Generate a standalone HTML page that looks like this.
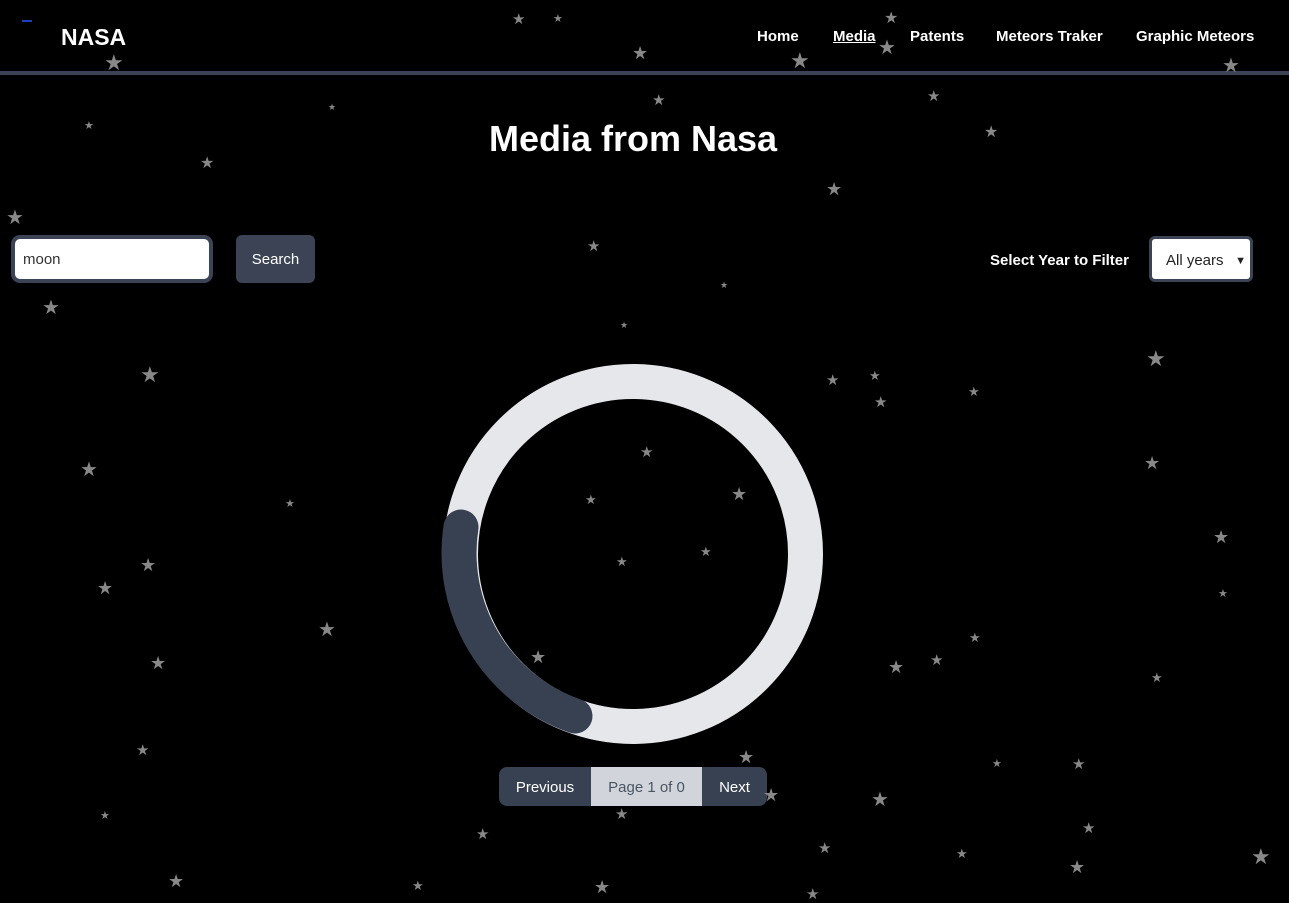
<!DOCTYPE html>
<html><head><meta charset="utf-8"><style>
body{margin:0;width:1289px;height:900px;background:#000;overflow:hidden;font-family:"Liberation Sans",sans-serif;position:relative;color:#fff}
.s{position:absolute;color:#888;line-height:1}
.hdr{position:absolute;left:0;top:0;width:1289px;height:71px;border-bottom:4px solid #3b4354}
.logo{position:absolute;left:61px;top:24px;font-size:23px;font-weight:bold}
.nav{position:absolute;top:28px;font-size:15px;font-weight:bold}
h1{position:absolute;left:0;width:1266px;text-align:center;top:118px;margin:0;font-size:36px;font-weight:bold}
.inp{position:absolute;left:11px;top:235px;height:40px;border:4px solid #3b4354;border-radius:9px;background:#fff;color:#333;font-size:15px;line-height:42px;padding-left:8px;width:186px}
.btn{position:absolute;left:236px;top:235px;width:79px;height:48px;background:#3b4354;border-radius:6px;font-size:15px;text-align:center;line-height:50px}
.lbl{position:absolute;left:990px;top:252px;font-size:15px;font-weight:bold}
.sel{position:absolute;left:1149px;top:236px;height:40px;border:3px solid #3b4354;border-radius:6px;background:#fff;color:#222;font-size:15px;line-height:44px;padding-left:14px;width:84px}
.pg{position:absolute;top:767px;height:39px;font-size:15px;line-height:41px;text-align:center}
</style></head><body>
<div class="hdr"></div>
<div style="position:absolute;left:22px;top:20px;width:10px;height:2px;background:#1a3fbf"></div>
<div class="logo">NASA</div>
<div class="nav" style="left:757px">Home</div>
<div class="nav" style="left:833px;text-decoration:underline">Media</div>
<div class="nav" style="left:910px">Patents</div>
<div class="nav" style="left:996px">Meteors Traker</div>
<div class="nav" style="left:1136px">Graphic Meteors</div>
<h1>Media from Nasa</h1>
<div class="inp">moon</div>
<div class="btn">Search</div>
<div class="lbl">Select Year to Filter</div>
<div class="sel">All years <span style="position:absolute;right:4px;font-size:11px">&#9660;</span></div>
<svg style="position:absolute;left:0;top:0" width="1289" height="900">
<circle cx="633" cy="554" r="172.5" fill="none" stroke="#e5e7eb" stroke-width="35"/>
<path d="M575 716 A172.5 172.5 0 0 1 461 527" fill="none" stroke="#374151" stroke-width="35" stroke-linecap="round"/>
</svg>
<div class="pg" style="left:499px;width:92px;background:#374151;border-radius:8px 0 0 8px">Previous</div>
<div class="pg" style="left:591px;width:111px;background:#d1d5db;color:#4b5563">Page 1 of 0</div>
<div class="pg" style="left:702px;width:65px;background:#374151;border-radius:0 8px 8px 0">Next</div>
<div class="s" style="left:512px;top:12px;font-size:15px">★</div>
<div class="s" style="left:553px;top:14px;font-size:11px">★</div>
<div class="s" style="left:104px;top:52px;font-size:22px">★</div>
<div class="s" style="left:632px;top:44px;font-size:18px">★</div>
<div class="s" style="left:790px;top:50px;font-size:22px">★</div>
<div class="s" style="left:878px;top:38px;font-size:20px">★</div>
<div class="s" style="left:884px;top:11px;font-size:16px">★</div>
<div class="s" style="left:1222px;top:56px;font-size:20px">★</div>
<div class="s" style="left:652px;top:93px;font-size:15px">★</div>
<div class="s" style="left:927px;top:89px;font-size:15px">★</div>
<div class="s" style="left:984px;top:125px;font-size:16px">★</div>
<div class="s" style="left:84px;top:121px;font-size:11px">★</div>
<div class="s" style="left:200px;top:156px;font-size:16px">★</div>
<div class="s" style="left:826px;top:180px;font-size:18px">★</div>
<div class="s" style="left:6px;top:208px;font-size:20px">★</div>
<div class="s" style="left:587px;top:239px;font-size:15px">★</div>
<div class="s" style="left:42px;top:298px;font-size:20px">★</div>
<div class="s" style="left:140px;top:364px;font-size:22px">★</div>
<div class="s" style="left:1146px;top:348px;font-size:22px">★</div>
<div class="s" style="left:826px;top:373px;font-size:15px">★</div>
<div class="s" style="left:869px;top:369px;font-size:13px">★</div>
<div class="s" style="left:874px;top:395px;font-size:15px">★</div>
<div class="s" style="left:968px;top:385px;font-size:13px">★</div>
<div class="s" style="left:80px;top:460px;font-size:20px">★</div>
<div class="s" style="left:640px;top:445px;font-size:15px">★</div>
<div class="s" style="left:1144px;top:454px;font-size:18px">★</div>
<div class="s" style="left:731px;top:485px;font-size:18px">★</div>
<div class="s" style="left:585px;top:493px;font-size:13px">★</div>
<div class="s" style="left:140px;top:556px;font-size:18px">★</div>
<div class="s" style="left:1213px;top:528px;font-size:18px">★</div>
<div class="s" style="left:97px;top:579px;font-size:18px">★</div>
<div class="s" style="left:318px;top:620px;font-size:20px">★</div>
<div class="s" style="left:150px;top:654px;font-size:18px">★</div>
<div class="s" style="left:530px;top:648px;font-size:18px">★</div>
<div class="s" style="left:888px;top:658px;font-size:18px">★</div>
<div class="s" style="left:930px;top:653px;font-size:15px">★</div>
<div class="s" style="left:969px;top:631px;font-size:13px">★</div>
<div class="s" style="left:1151px;top:671px;font-size:13px">★</div>
<div class="s" style="left:136px;top:743px;font-size:15px">★</div>
<div class="s" style="left:738px;top:748px;font-size:18px">★</div>
<div class="s" style="left:1072px;top:757px;font-size:15px">★</div>
<div class="s" style="left:871px;top:790px;font-size:20px">★</div>
<div class="s" style="left:763px;top:786px;font-size:18px">★</div>
<div class="s" style="left:615px;top:807px;font-size:15px">★</div>
<div class="s" style="left:476px;top:827px;font-size:15px">★</div>
<div class="s" style="left:1082px;top:821px;font-size:15px">★</div>
<div class="s" style="left:818px;top:841px;font-size:15px">★</div>
<div class="s" style="left:956px;top:847px;font-size:13px">★</div>
<div class="s" style="left:1251px;top:846px;font-size:22px">★</div>
<div class="s" style="left:1069px;top:858px;font-size:18px">★</div>
<div class="s" style="left:168px;top:872px;font-size:18px">★</div>
<div class="s" style="left:412px;top:879px;font-size:13px">★</div>
<div class="s" style="left:594px;top:878px;font-size:18px">★</div>
<div class="s" style="left:806px;top:887px;font-size:15px">★</div>
<div class="s" style="left:100px;top:811px;font-size:11px">★</div>
<div class="s" style="left:328px;top:103px;font-size:9px">★</div>
<div class="s" style="left:720px;top:281px;font-size:9px">★</div>
<div class="s" style="left:620px;top:321px;font-size:9px">★</div>
<div class="s" style="left:285px;top:499px;font-size:11px">★</div>
<div class="s" style="left:700px;top:545px;font-size:13px">★</div>
<div class="s" style="left:616px;top:555px;font-size:13px">★</div>
<div class="s" style="left:992px;top:759px;font-size:11px">★</div>
<div class="s" style="left:1218px;top:589px;font-size:11px">★</div>
</body></html>
